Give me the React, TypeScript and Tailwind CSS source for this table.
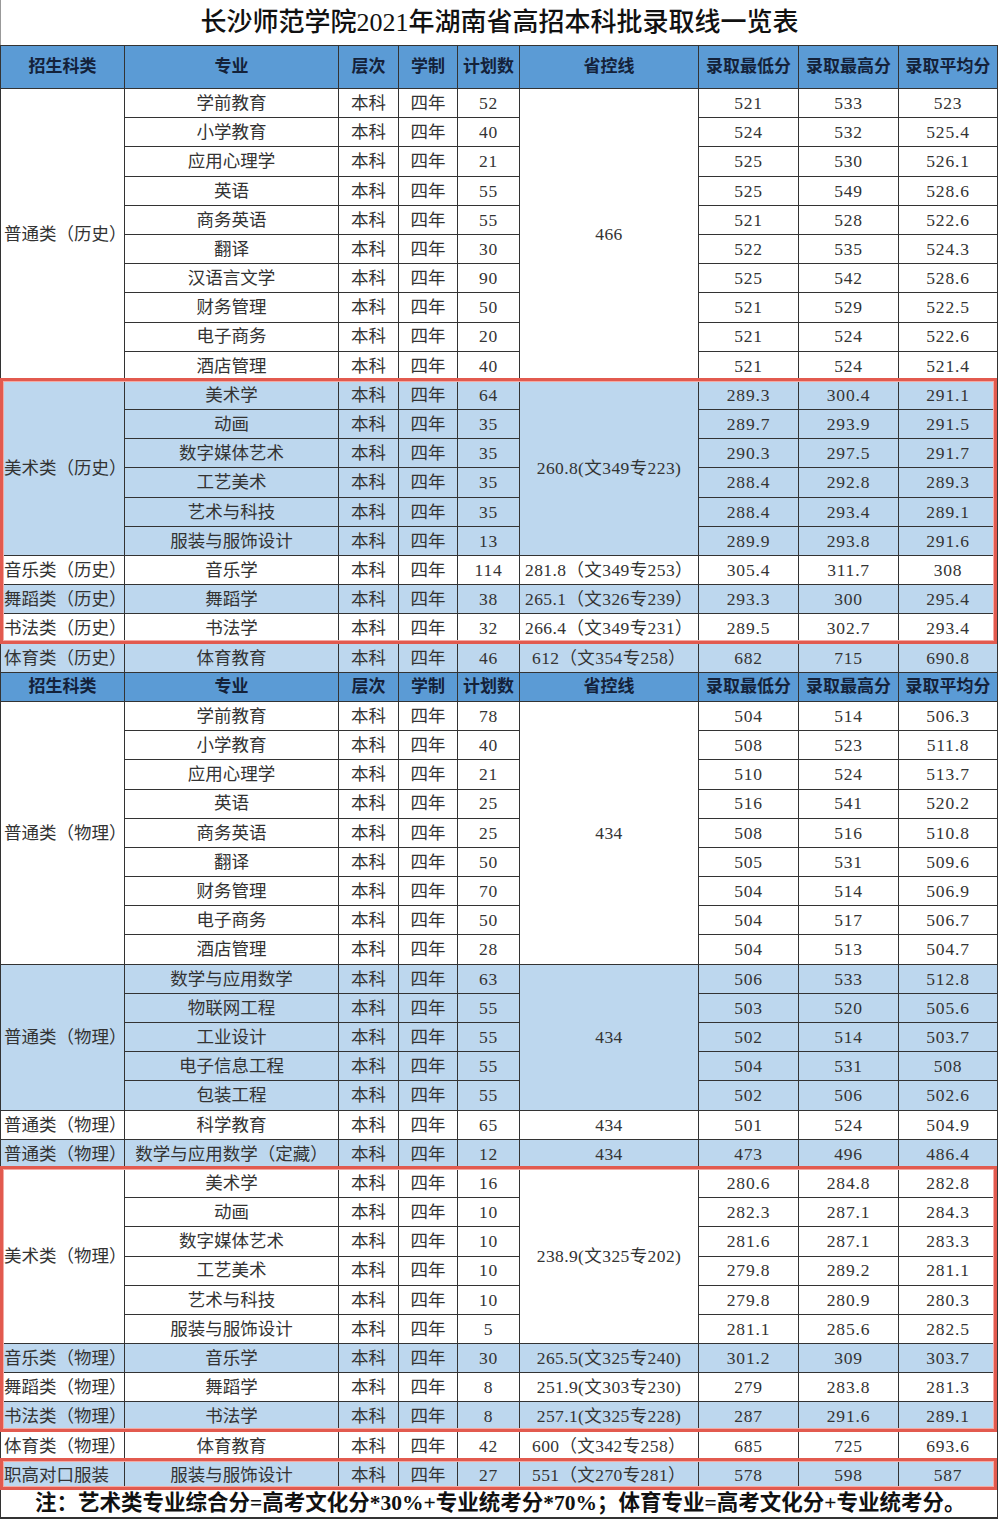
import React from 'react';

type Row = [string, string, string, string, string];

interface Group {
  cat: string;
  line: string;
  blue: boolean;
  rows: Row[];
}

const PART_HISTORY: Group[] = [
  {
    cat: '普通类（历史）',
    line: '466',
    blue: false,
    rows: [
      ['学前教育', '52', '521', '533', '523'],
      ['小学教育', '40', '524', '532', '525.4'],
      ['应用心理学', '21', '525', '530', '526.1'],
      ['英语', '55', '525', '549', '528.6'],
      ['商务英语', '55', '521', '528', '522.6'],
      ['翻译', '30', '522', '535', '524.3'],
      ['汉语言文学', '90', '525', '542', '528.6'],
      ['财务管理', '50', '521', '529', '522.5'],
      ['电子商务', '20', '521', '524', '522.6'],
      ['酒店管理', '40', '521', '524', '521.4'],
    ],
  },
  {
    cat: '美术类（历史）',
    line: '260.8(文349专223)',
    blue: true,
    rows: [
      ['美术学', '64', '289.3', '300.4', '291.1'],
      ['动画', '35', '289.7', '293.9', '291.5'],
      ['数字媒体艺术', '35', '290.3', '297.5', '291.7'],
      ['工艺美术', '35', '288.4', '292.8', '289.3'],
      ['艺术与科技', '35', '288.4', '293.4', '289.1'],
      ['服装与服饰设计', '13', '289.9', '293.8', '291.6'],
    ],
  },
  { cat: '音乐类（历史）', line: '281.8（文349专253）', blue: false, rows: [['音乐学', '114', '305.4', '311.7', '308']] },
  { cat: '舞蹈类（历史）', line: '265.1（文326专239）', blue: true, rows: [['舞蹈学', '38', '293.3', '300', '295.4']] },
  { cat: '书法类（历史）', line: '266.4（文349专231）', blue: false, rows: [['书法学', '32', '289.5', '302.7', '293.4']] },
  { cat: '体育类（历史）', line: '612（文354专258）', blue: true, rows: [['体育教育', '46', '682', '715', '690.8']] },
];

const PART_PHYSICS: Group[] = [
  {
    cat: '普通类（物理）',
    line: '434',
    blue: false,
    rows: [
      ['学前教育', '78', '504', '514', '506.3'],
      ['小学教育', '40', '508', '523', '511.8'],
      ['应用心理学', '21', '510', '524', '513.7'],
      ['英语', '25', '516', '541', '520.2'],
      ['商务英语', '25', '508', '516', '510.8'],
      ['翻译', '50', '505', '531', '509.6'],
      ['财务管理', '70', '504', '514', '506.9'],
      ['电子商务', '50', '504', '517', '506.7'],
      ['酒店管理', '28', '504', '513', '504.7'],
    ],
  },
  {
    cat: '普通类（物理）',
    line: '434',
    blue: true,
    rows: [
      ['数学与应用数学', '63', '506', '533', '512.8'],
      ['物联网工程', '55', '503', '520', '505.6'],
      ['工业设计', '55', '502', '514', '503.7'],
      ['电子信息工程', '55', '504', '531', '508'],
      ['包装工程', '55', '502', '506', '502.6'],
    ],
  },
  { cat: '普通类（物理）', line: '434', blue: false, rows: [['科学教育', '65', '501', '524', '504.9']] },
  { cat: '普通类（物理）', line: '434', blue: true, rows: [['数学与应用数学（定藏）', '12', '473', '496', '486.4']] },
  {
    cat: '美术类（物理）',
    line: '238.9(文325专202)',
    blue: false,
    rows: [
      ['美术学', '16', '280.6', '284.8', '282.8'],
      ['动画', '10', '282.3', '287.1', '284.3'],
      ['数字媒体艺术', '10', '281.6', '287.1', '283.3'],
      ['工艺美术', '10', '279.8', '289.2', '281.1'],
      ['艺术与科技', '10', '279.8', '280.9', '280.3'],
      ['服装与服饰设计', '5', '281.1', '285.6', '282.5'],
    ],
  },
  { cat: '音乐类（物理）', line: '265.5(文325专240)', blue: true, rows: [['音乐学', '30', '301.2', '309', '303.7']] },
  { cat: '舞蹈类（物理）', line: '251.9(文303专230)', blue: false, rows: [['舞蹈学', '8', '279', '283.8', '281.3']] },
  { cat: '书法类（物理）', line: '257.1(文325专228)', blue: true, rows: [['书法学', '8', '287', '291.6', '289.1']] },
  { cat: '体育类（物理）', line: '600（文342专258）', blue: false, rows: [['体育教育', '42', '685', '725', '693.6']] },
  { cat: '职高对口服装', line: '551（文270专281）', blue: true, rows: [['服装与服饰设计', '27', '578', '598', '587']] },
];

const ROW_SPAN: Record<number, string> = {
  1: 'row-span-1',
  5: 'row-span-5',
  6: 'row-span-6',
  9: 'row-span-9',
  10: 'row-span-10',
};

const HEADERS = ['招生科类', '专业', '层次', '学制', '计划数', '省控线', '录取最低分', '录取最高分', '录取平均分'];

const HeaderRow: React.FC = () => (
  <>
    {HEADERS.map((h) => (
      <div
        key={h}
        className="flex items-center justify-center bg-[#5b9bd5] text-[17px] font-bold text-[#14223a] whitespace-nowrap"
      >
        {h}
      </div>
    ))}
  </>
);

const GroupRows: React.FC<{ group: Group }> = ({ group }) => {
  const bg = group.blue ? 'bg-[#bdd7ee]' : 'bg-white';
  const span = ROW_SPAN[group.rows.length];
  const cell = `flex items-center justify-center ${bg} whitespace-nowrap`;
  const num = `${cell} tracking-[0.8px]`;
  return (
    <>
      {group.rows.map((r, i) => (
        <React.Fragment key={r[0] + i}>
          {i === 0 && (
            <div className={`col-start-1 ${span} flex items-center ${bg} pl-[3px] whitespace-nowrap overflow-visible`}>
              {group.cat}
            </div>
          )}
          <div className={`col-start-2 ${cell}`}>{r[0]}</div>
          <div className={`col-start-3 ${cell}`}>本科</div>
          <div className={`col-start-4 ${cell}`}>四年</div>
          <div className={`col-start-5 ${num}`}>{r[1]}</div>
          {i === 0 && <div className={`col-start-6 ${span} ${cell} tracking-[0.4px]`}>{group.line}</div>}
          <div className={`col-start-7 ${num}`}>{r[2]}</div>
          <div className={`col-start-8 ${num}`}>{r[3]}</div>
          <div className={`col-start-9 ${num}`}>{r[4]}</div>
        </React.Fragment>
      ))}
    </>
  );
};

export default function App() {
  return (
    <div className="w-[1000px] bg-white font-['Liberation_Serif','Noto_Sans_CJK_SC',serif] text-[#333]">
      <div className="flex h-[45px] w-[998px] items-center justify-center border-l border-[#999] text-[26px] font-medium text-[#111]">
        长沙师范学院2021年湖南省高招本科批录取线一览表
      </div>
      <div className="relative w-[998px]">
        <div className="grid grid-cols-[123px_213px_59px_58px_61px_178px_99px_99px_98px] grid-rows-[42px] auto-rows-[28.2px] gap-px border border-[#333] bg-[#333] text-[17.5px]">
          <HeaderRow />
          {PART_HISTORY.map((g, i) => (
            <GroupRows key={'h' + i} group={g} />
          ))}
          <HeaderRow />
          {PART_PHYSICS.map((g, i) => (
            <GroupRows key={'p' + i} group={g} />
          ))}
          <div className="col-span-9 flex h-[27px] items-center bg-white pl-[34px] text-[21.5px] font-bold text-[#111] whitespace-nowrap">
            注：艺术类专业综合分=高考文化分*30%+专业统考分*70%；体育专业=高考文化分+专业统考分。
          </div>
        </div>
        {/* red highlight boxes drawn over the art rows */}
        <div className="pointer-events-none absolute left-0 top-[333px] h-[266px] w-[997px] border-[3px] border-[#e25a4f] shadow-[inset_0_0_0_1px_#f3aaa4]" />
        <div className="pointer-events-none absolute left-0 top-[1121px] h-[266px] w-[997px] border-[3px] border-[#e25a4f] shadow-[inset_0_0_0_1px_#f3aaa4]" />
        <div className="pointer-events-none absolute left-0 top-[1413px] h-[32px] w-[997px] border-[3px] border-[#e25a4f] shadow-[inset_0_0_0_1px_#f3aaa4]" />
      </div>
    </div>
  );
}
